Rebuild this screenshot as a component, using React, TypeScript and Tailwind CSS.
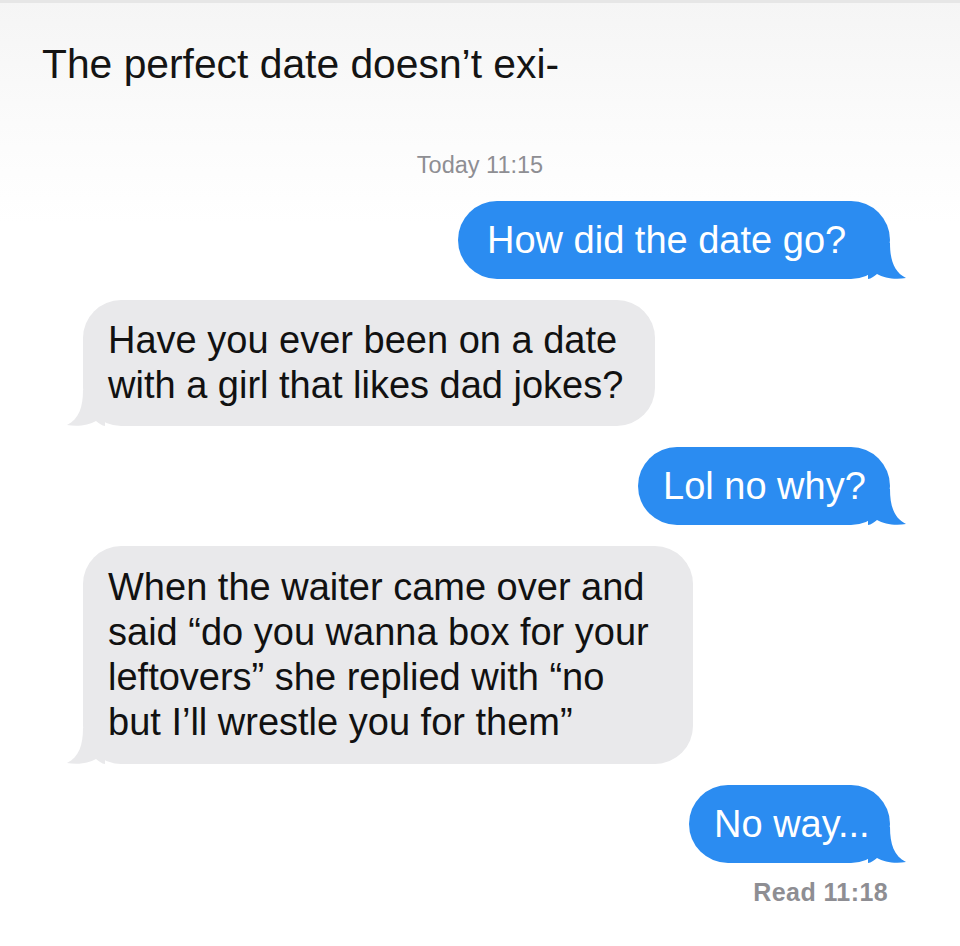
import React from "react";

const BLUE = "#2b8cf1";
const GRAY = "#e9e9eb";

function Tail({ color, side }: { color: string; side: "left" | "right" }) {
  return (
    <svg
      width="38"
      height="36"
      viewBox="0 0 38 36"
      className={
        side === "right"
          ? "absolute right-[-16px] bottom-0"
          : "absolute left-[-16px] bottom-0 -scale-x-100"
      }
    >
      <path
        d="M0 0 H22 C22 17 26 29 38 35 C27 37 16 35 9 31 C6 33 3 36 0 36 Z"
        fill={color}
      />
    </svg>
  );
}

function Sent({ children, w }: { children: React.ReactNode; w: string }) {
  return (
    <div className="flex justify-end">
      <div
        className={`relative rounded-[39px] py-[16px] text-[38px] leading-[46px] text-white whitespace-nowrap ${w}`}
        style={{ backgroundColor: BLUE }}
      >
        <Tail color={BLUE} side="right" />
        <span className="relative">{children}</span>
      </div>
    </div>
  );
}

function Received({ lines, w }: { lines: string[]; w: string }) {
  return (
    <div className="flex justify-start">
      <div
        className={`relative rounded-[38px] pl-[25px] text-[38px] leading-[45px] text-[#111] whitespace-nowrap ${w}`}
        style={{ backgroundColor: GRAY }}
      >
        <Tail color={GRAY} side="left" />
        <div className="relative">
          {lines.map((l, i) => (
            <div key={i}>{l}</div>
          ))}
        </div>
      </div>
    </div>
  );
}

export default function App() {
  return (
    <div
      className="w-[960px] h-[946px] overflow-hidden border-t-[3px] border-[#e6e6e6] bg-[linear-gradient(to_bottom,#f5f5f5_0px,#fbfbfb_120px,#ffffff_220px)]"
      style={{ fontFamily: '"Liberation Sans", Arial, sans-serif' }}
    >
      <div className="pt-[35px] pl-[42px] text-[40.8px] leading-[52px] text-[#141414]">
        The perfect date doesn’t exi-
      </div>
      <div className="mt-[61px] text-center text-[23.5px] leading-[28px] text-[#8e8e93]">
        Today 11:15
      </div>
      <div className="mt-[22px] flex flex-col gap-[21px] pl-[83px] pr-[70px]">
        <Sent w="w-[432px] pl-[29px]">How did the date go?</Sent>
        <Received
          w="w-[572px] py-[18px]"
          lines={["Have you ever been on a date", "with a girl that likes dad jokes?"]}
        />
        <Sent w="w-[252px] pl-[25px]">Lol no why?</Sent>
        <Received
          w="w-[610px] py-[19px]"
          lines={[
            "When the waiter came over and",
            "said “do you wanna box for your",
            "leftovers” she replied with “no",
            "but I’ll wrestle you for them”",
          ]}
        />
        <Sent w="w-[201px] pl-[25px]">No way...</Sent>
      </div>
      <div className="mt-[14px] pr-[72px] text-right text-[25px] leading-[30px] font-semibold tracking-[0.4px] text-[#8e8e93]">
        Read 11:18
      </div>
    </div>
  );
}
